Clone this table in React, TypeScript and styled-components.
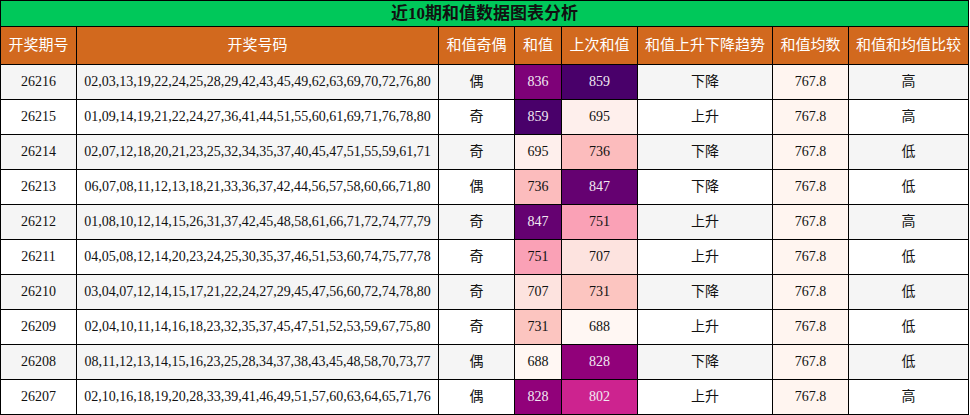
import React from "react";
import styled, { createGlobalStyle } from "styled-components";

const GlobalStyle = createGlobalStyle`
  html, body { margin: 0; padding: 0; background: #ffffff; }
  body { font-family: "Liberation Serif", "Noto Sans CJK SC", serif; }
`;

type Row = {
  period: string;
  nums: string;
  parity: string;
  sum: number;
  prev: number;
  trend: string;
  avg: string;
  cmp: string;
};

const rows: Row[] = [
  { period: "26216", nums: "02,03,13,19,22,24,25,28,29,42,43,45,49,62,63,69,70,72,76,80", parity: "偶", sum: 836, prev: 859, trend: "下降", avg: "767.8", cmp: "高" },
  { period: "26215", nums: "01,09,14,19,21,22,24,27,36,41,44,51,55,60,61,69,71,76,78,80", parity: "奇", sum: 859, prev: 695, trend: "上升", avg: "767.8", cmp: "高" },
  { period: "26214", nums: "02,07,12,18,20,21,23,25,32,34,35,37,40,45,47,51,55,59,61,71", parity: "奇", sum: 695, prev: 736, trend: "下降", avg: "767.8", cmp: "低" },
  { period: "26213", nums: "06,07,08,11,12,13,18,21,33,36,37,42,44,56,57,58,60,66,71,80", parity: "偶", sum: 736, prev: 847, trend: "下降", avg: "767.8", cmp: "低" },
  { period: "26212", nums: "01,08,10,12,14,15,26,31,37,42,45,48,58,61,66,71,72,74,77,79", parity: "奇", sum: 847, prev: 751, trend: "上升", avg: "767.8", cmp: "高" },
  { period: "26211", nums: "04,05,08,12,14,20,23,24,25,30,35,37,46,51,53,60,74,75,77,78", parity: "奇", sum: 751, prev: 707, trend: "上升", avg: "767.8", cmp: "低" },
  { period: "26210", nums: "03,04,07,12,14,15,17,21,22,24,27,29,45,47,56,60,72,74,78,80", parity: "奇", sum: 707, prev: 731, trend: "下降", avg: "767.8", cmp: "低" },
  { period: "26209", nums: "02,04,10,11,14,16,18,23,32,35,37,45,47,51,52,53,59,67,75,80", parity: "奇", sum: 731, prev: 688, trend: "上升", avg: "767.8", cmp: "低" },
  { period: "26208", nums: "08,11,12,13,14,15,16,23,25,28,34,37,38,43,45,48,58,70,73,77", parity: "偶", sum: 688, prev: 828, trend: "下降", avg: "767.8", cmp: "低" },
  { period: "26207", nums: "02,10,16,18,19,20,28,33,39,41,46,49,51,57,60,63,64,65,71,76", parity: "偶", sum: 828, prev: 802, trend: "上升", avg: "767.8", cmp: "高" },
];

const headers = ["开奖期号", "开奖号码", "和值奇偶", "和值", "上次和值", "和值上升下降趋势", "和值均数", "和值和均值比较"];

const RDPU = ["#fff7f3", "#fde0dd", "#fcc5c0", "#fa9fb5", "#f768a1", "#dd3497", "#ae017e", "#7a0177", "#49006a"];
const MIN = 688;
const MAX = 859;

function hexToRgb(h: string): number[] {
  return [1, 3, 5].map((i) => parseInt(h.slice(i, i + 2), 16));
}

function scale(v: number): { bg: string; dark: boolean } {
  const t = Math.max(0, Math.min(1, (v - MIN) / (MAX - MIN)));
  const pos = t * (RDPU.length - 1);
  const i = Math.min(RDPU.length - 2, Math.floor(pos));
  const f = pos - i;
  const a = hexToRgb(RDPU[i]);
  const b = hexToRgb(RDPU[i + 1]);
  const c = a.map((x, k) => Math.round(x + (b[k] - x) * f));
  const lum = 0.299 * c[0] + 0.587 * c[1] + 0.114 * c[2];
  return { bg: `rgb(${c[0]}, ${c[1]}, ${c[2]})`, dark: lum < 128 };
}

const COLS = "76px 362px 76px 47px 76px 135px 76px 120px";

const Page = styled.div`
  width: 970px;
  height: 415px;
  background: #ffffff;
`;

const Table = styled.div`
  width: 969px;
  border-left: 1px solid #000;
  border-top: 1px solid #000;
  box-sizing: border-box;
`;

const Title = styled.div`
  height: 26px;
  box-sizing: border-box;
  background: #00c85a;
  border-right: 1px solid #000;
  border-bottom: 1px solid #000;
  display: flex;
  align-items: center;
  justify-content: center;
  font-size: 17px;
  font-weight: bold;
  color: #111;
  line-height: 1;
`;

const Grid = styled.div<{ $height: number }>`
  display: grid;
  grid-template-columns: ${COLS};
  grid-auto-rows: ${(p) => p.$height}px;
`;

const HeadCell = styled.div`
  box-sizing: border-box;
  background: #d2691e;
  border-right: 1px solid #000;
  border-bottom: 1px solid #000;
  display: flex;
  align-items: center;
  justify-content: center;
  color: #ffffff;
  font-size: 15px;
  line-height: 1;
  white-space: nowrap;
  overflow: hidden;
`;

const Cell = styled.div<{ $bg?: string; $light?: boolean }>`
  box-sizing: border-box;
  border-right: 1px solid #000;
  border-bottom: 1px solid #000;
  background: ${(p) => p.$bg || "transparent"};
  display: flex;
  align-items: center;
  justify-content: center;
  color: ${(p) => (p.$light ? "#f2eaf2" : "#111")};
  font-size: 14px;
  line-height: 1;
  white-space: nowrap;
  overflow: hidden;
`;

const DataRow = styled.div<{ $stripe: boolean }>`
  display: contents;
  & > div {
    background-color: ${(p) => (p.$stripe ? "#f5f5f5" : "#ffffff")};
  }
`;

const AvgCell = styled(Cell)`
  && {
    background-color: #fff5f0;
  }
`;

const HeatCell = ({ value }: { value: number }) => {
  const s = scale(value);
  return (
    <Cell $light={s.dark} style={{ backgroundColor: s.bg }}>
      {value}
    </Cell>
  );
};

export default function App() {
  return (
    <Page>
      <GlobalStyle />
      <Table>
        <Title>近10期和值数据图表分析</Title>
        <Grid $height={38}>
          {headers.map((h) => (
            <HeadCell key={h}>{h}</HeadCell>
          ))}
        </Grid>
        <Grid $height={35}>
          {rows.map((r, i) => (
            <DataRow key={r.period} $stripe={i % 2 === 0}>
              <Cell>{r.period}</Cell>
              <Cell>{r.nums}</Cell>
              <Cell>{r.parity}</Cell>
              <HeatCell value={r.sum} />
              <HeatCell value={r.prev} />
              <Cell>{r.trend}</Cell>
              <AvgCell>{r.avg}</AvgCell>
              <Cell>{r.cmp}</Cell>
            </DataRow>
          ))}
        </Grid>
      </Table>
    </Page>
  );
}
